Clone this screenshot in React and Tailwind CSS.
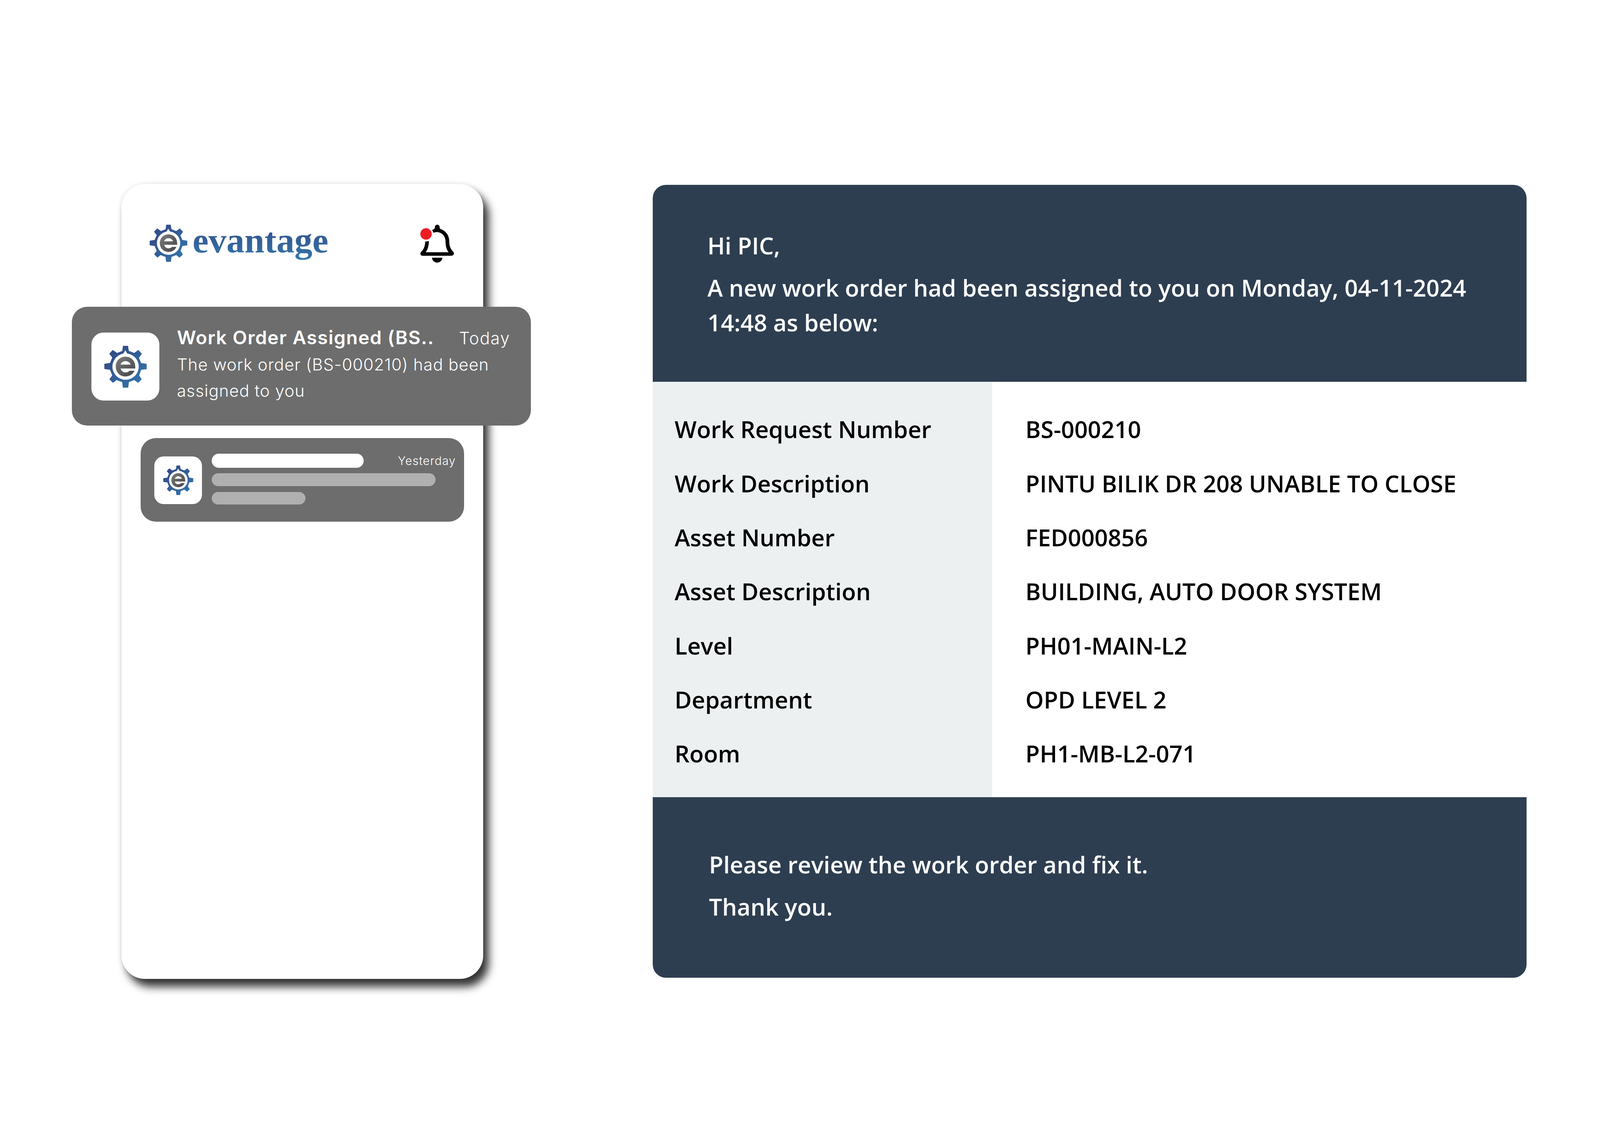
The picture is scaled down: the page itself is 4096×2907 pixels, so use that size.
function LogoMark({ className }) {
  return (
    <svg viewBox="118 92 484 476" className={className}>
      <defs>
        <linearGradient id="gearBlue" x1="0" y1="0" x2="1" y2="1">
          <stop offset="0.1" stopColor="#324885" />
          <stop offset="0.9" stopColor="#3376aa" />
        </linearGradient>
        <linearGradient id="letterGrey" x1="0" y1="0" x2="1" y2="1">
          <stop offset="0.1" stopColor="#767676" />
          <stop offset="0.9" stopColor="#4a4a4e" />
        </linearGradient>
      </defs>
      <path
        fill="url(#gearBlue)"
        d="M322 150L330 92L388 92L397 150L458 173L505 139L546 182L512 228L537 288L600 297L600 358L537 365L514 428L544 474L502 514L458 481L398 505L390 568L329 568L321 505L258 481L217 514L175 472L208 428L182 365L118 356L118 297L182 287L208 226L174 182L214 139L263 173Z"
      />
      <circle cx="360" cy="328" r="150" fill="#fff" />
      <path d="M357 143L380 182L333 182Z" fill="#fff" />
      <path
        fill="url(#letterGrey)"
        fillRule="evenodd"
        d="M470 350L303 350C312 380 335 395 358 395C380 395 392 388 405 376L462 376C445 415 405 441 358 441C295 441 248 392 248 328C248 265 295 216 359 216C425 216 470 265 470 328ZM303 305L418 305C410 282 385 265 359 265C333 265 311 282 303 305Z"
      />
    </svg>
  );
}

function BellIcon({ className }) {
  return (
    <svg viewBox="138 98 430 484" className={className}>
      <path d="M290 163C310 160 325 150 325 128C325 110 338 98 355 98C372 98 385 110 385 128C385 140 388 148 395 152C455 170 505 225 508 300C510 370 520 400 560 445C578 465 565 495 535 495L170 495C140 495 130 465 150 445C185 410 198 370 201 313C215 313 235 310 248 305C245 370 235 410 207 450L500 450C470 410 462 370 460 300C458 230 390 170 305 200Z" />
      <path d="M287 520L421 520C418 555 390 582 354 582C318 582 290 555 287 520Z" />
      <circle cx="211" cy="216" r="73" fill="#ed1c24" />
    </svg>
  );
}

const details = [
  ["Work Request Number", "BS-000210"],
  ["Work Description", "PINTU BILIK DR 208 UNABLE TO CLOSE"],
  ["Asset Number", "FED000856"],
  ["Asset Description", "BUILDING, AUTO DOOR SYSTEM"],
  ["Level", "PH01-MAIN-L2"],
  ["Department", "OPD LEVEL 2"],
  ["Room", "PH1-MB-L2-071"],
];

function PhoneCard() {
  return (
    <div className="flex h-[2034px] w-[926px] flex-col rounded-[60px] bg-white shadow-[14px_20px_22px_rgba(0,0,0,0.8),0_0_14px_rgba(0,0,0,0.1)]">
      <div className="flex h-[314px] shrink-0 items-start pl-[72px] pr-[75px] pt-[104px]">
        <LogoMark className="h-[95px] w-[97px] shrink-0" />
        <span className="ml-[13px] mt-[-12px] bg-linear-to-b from-[#324885] to-[#3378ac] bg-clip-text font-['Liberation_Serif'] text-[92px] font-bold leading-[104px] text-transparent">
          evantage
        </span>
        <BellIcon className="ml-auto h-[97px] w-[86px] shrink-0" />
      </div>

      <div className="ml-[-127px] flex h-[304px] w-[1175px] shrink-0 rounded-[39px] bg-[#6d6d6d] pl-[50px] pr-[53px] pt-[66px] font-['Inter'] text-white">
        <div className="flex h-[174px] w-[174px] shrink-0 items-center justify-center rounded-[31px] bg-white">
          <LogoMark className="h-[107px] w-[109px]" />
        </div>
        <div className="ml-[45px] mt-[-21px] min-w-0 flex-1">
          <div className="flex items-baseline justify-between">
            <span className="text-[48px] font-semibold leading-[67px] tracking-[1.5px]">
              Work Order Assigned (BS..
            </span>
            <span className="text-[43px] font-light leading-[67px] tracking-[1.7px]">Today</span>
          </div>
          <p className="text-[42.5px] font-light leading-[67px] tracking-[1px]">
            The work order (BS-000210) had been
            <br />
            assigned to you
          </p>
        </div>
      </div>

      <div className="ml-[49px] mt-[32px] flex h-[214px] w-[828px] shrink-0 rounded-[39px] bg-[#6d6d6d] pl-[35px] pt-[40px]">
        <div className="mt-[7px] flex h-[122px] w-[122px] shrink-0 items-center justify-center rounded-[24px] bg-white">
          <LogoMark className="h-[76px] w-[77px]" />
        </div>
        <div className="ml-[25px] flex-1">
          <div className="flex items-start justify-between pr-[21px]">
            <div className="h-[36px] w-[389px] rounded-full bg-white" />
            <span className="font-['Inter'] text-[30px] font-light leading-[36px] tracking-[1.2px] text-white">Yesterday</span>
          </div>
          <div className="mt-[14px] h-[33px] w-[573px] rounded-full bg-[#b0b0b0]" />
          <div className="mt-[15px] h-[32px] w-[240px] rounded-full bg-[#b0b0b0]" />
        </div>
      </div>
    </div>
  );
}

function WorkOrderCard() {
  return (
    <div className="ml-[434px] mt-[2px] w-[2237px] overflow-hidden rounded-[34px] font-['Open_Sans'] text-[59.7px] font-semibold">
      <div className="h-[504px] bg-[#2e3e51] pl-[140px] pr-[100px] pt-[110px] text-white">
        <p className="leading-[89px]">Hi PIC,</p>
        <p className="mt-[19px] leading-[89px]">
          A new work order had been assigned to you on Monday, 04-11-2024
          <br />
          14:48 as below:
        </p>
      </div>
      <div className="flex h-[1063px] text-black">
        <div className="w-[869px] shrink-0 bg-[#ecf0f1] pl-[56px] pt-[52px]">
          {details.map(([label]) => (
            <div key={label} className="flex h-[138.3px] items-center">
              {label}
            </div>
          ))}
        </div>
        <div className="flex-1 bg-white pl-[85px] pt-[52px]">
          {details.map(([label, value]) => (
            <div key={label} className="flex h-[138.3px] items-center">
              {value}
            </div>
          ))}
        </div>
      </div>
      <div className="h-[462px] bg-[#2e3e51] pl-[144px] pt-[118px] text-white">
        <p className="leading-[108px]">Please review the work order and fix it.</p>
        <p className="leading-[108px]">Thank you.</p>
      </div>
    </div>
  );
}

export default function App() {
  return (
    <div className="flex h-[2907px] w-[4096px] items-start overflow-hidden bg-white pl-[311px] pt-[471px]">
      <PhoneCard />
      <WorkOrderCard />
    </div>
  );
}
